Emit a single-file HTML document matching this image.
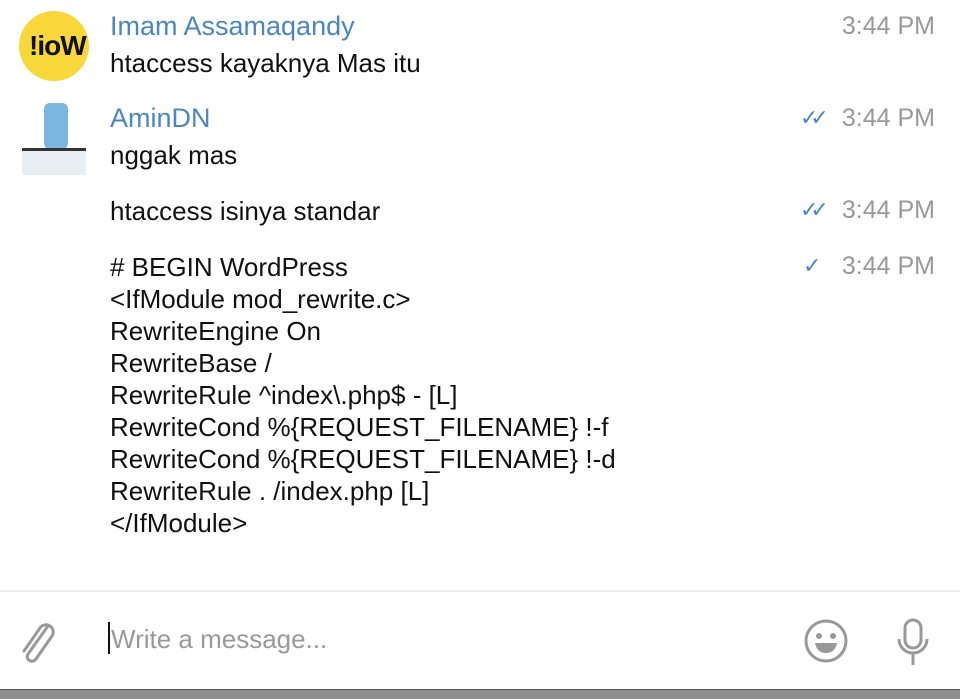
<!DOCTYPE html><html><head><style>
body{margin:0;width:960px;height:698px;background:#fff;position:relative;overflow:hidden;font-family:"Liberation Sans",sans-serif;}
.a{position:absolute;}
.n{color:#4a86c6;font-size:27px;}
.t{color:#111;font-size:26px;line-height:32px;}
.tm{color:#999;font-size:25px;right:25px;}
.ck{color:#4a86c6;font-size:22px;letter-spacing:-8px;}
</style></head><body>
<div class="a" style="left:19px;top:11px;width:70px;height:70px;border-radius:50%;background:#f8d73b;"></div>
<div class="a" style="left:29px;top:30px;font:bold 28px 'Liberation Sans';color:#111;letter-spacing:-1px">!ioW</div>
<div class="a n" style="left:110px;top:11px">Imam Assamaqandy</div>
<div class="a t" style="left:110px;top:47px">htaccess kayaknya Mas itu</div>
<div class="a tm" style="top:12px">3:44 PM</div>

<div class="a" style="left:44px;top:103px;width:24px;height:46px;background:#7cb7e0;border-radius:6px"></div>
<div class="a" style="left:22px;top:148px;width:64px;height:24px;background:#e8eef3;border-top:3px solid #333"></div>
<div class="a n" style="left:110px;top:103px">AminDN</div>
<div class="a t" style="left:110px;top:139px">nggak mas</div>
<div class="a tm" style="top:104px">3:44 PM</div>
<div class="a ck" style="left:800px;top:105px">✓✓</div>

<div class="a t" style="left:110px;top:195px">htaccess isinya standar</div>
<div class="a tm" style="top:196px">3:44 PM</div>
<div class="a ck" style="left:800px;top:197px">✓✓</div>

<div class="a t" style="left:110px;top:251px"># BEGIN WordPress<br>&lt;IfModule mod_rewrite.c&gt;<br>RewriteEngine On<br>RewriteBase /<br>RewriteRule ^index\.php$ - [L]<br>RewriteCond %{REQUEST_FILENAME} !-f<br>RewriteCond %{REQUEST_FILENAME} !-d<br>RewriteRule . /index.php [L]<br>&lt;/IfModule&gt;</div>
<div class="a tm" style="top:252px">3:44 PM</div>
<div class="a ck" style="left:803px;top:253px">✓</div>

<div class="a" style="left:0;top:590px;width:960px;height:2px;background:#ececec"></div>
<svg class="a" style="left:18px;top:618px" width="44" height="46" viewBox="0 0 44 46"><path d="M30 8 L10 36 a4.5 4.5 0 0 0 8 5 L34 18 a7 7 0 0 0 -12 -8 L6 33" fill="none" stroke="#999" stroke-width="3" stroke-linecap="round"/></svg>
<div class="a" style="left:108px;top:622px;width:2px;height:32px;background:#111"></div>
<div class="a" style="left:111px;top:624px;font-size:26px;color:#999">Write a message...</div>
<svg class="a" style="left:802px;top:617px" width="48" height="48" viewBox="0 0 48 48"><circle cx="24" cy="24" r="20" fill="none" stroke="#999" stroke-width="3"/><circle cx="17" cy="19" r="3" fill="#999"/><circle cx="31" cy="19" r="3" fill="#999"/><path d="M13 26 h22 q-2 10 -11 10 q-9 0 -11 -10z" fill="#999"/></svg>
<svg class="a" style="left:893px;top:617px" width="40" height="50" viewBox="0 0 40 50"><rect x="12" y="3" width="16" height="28" rx="8" fill="none" stroke="#999" stroke-width="3"/><path d="M6 22 a14 14 0 0 0 28 0 M20 36 v12" fill="none" stroke="#999" stroke-width="3"/></svg>
<div class="a" style="left:0;top:689px;width:960px;height:9px;background:#8e8e8e;border-top:1px solid #555"></div>
</body></html>
